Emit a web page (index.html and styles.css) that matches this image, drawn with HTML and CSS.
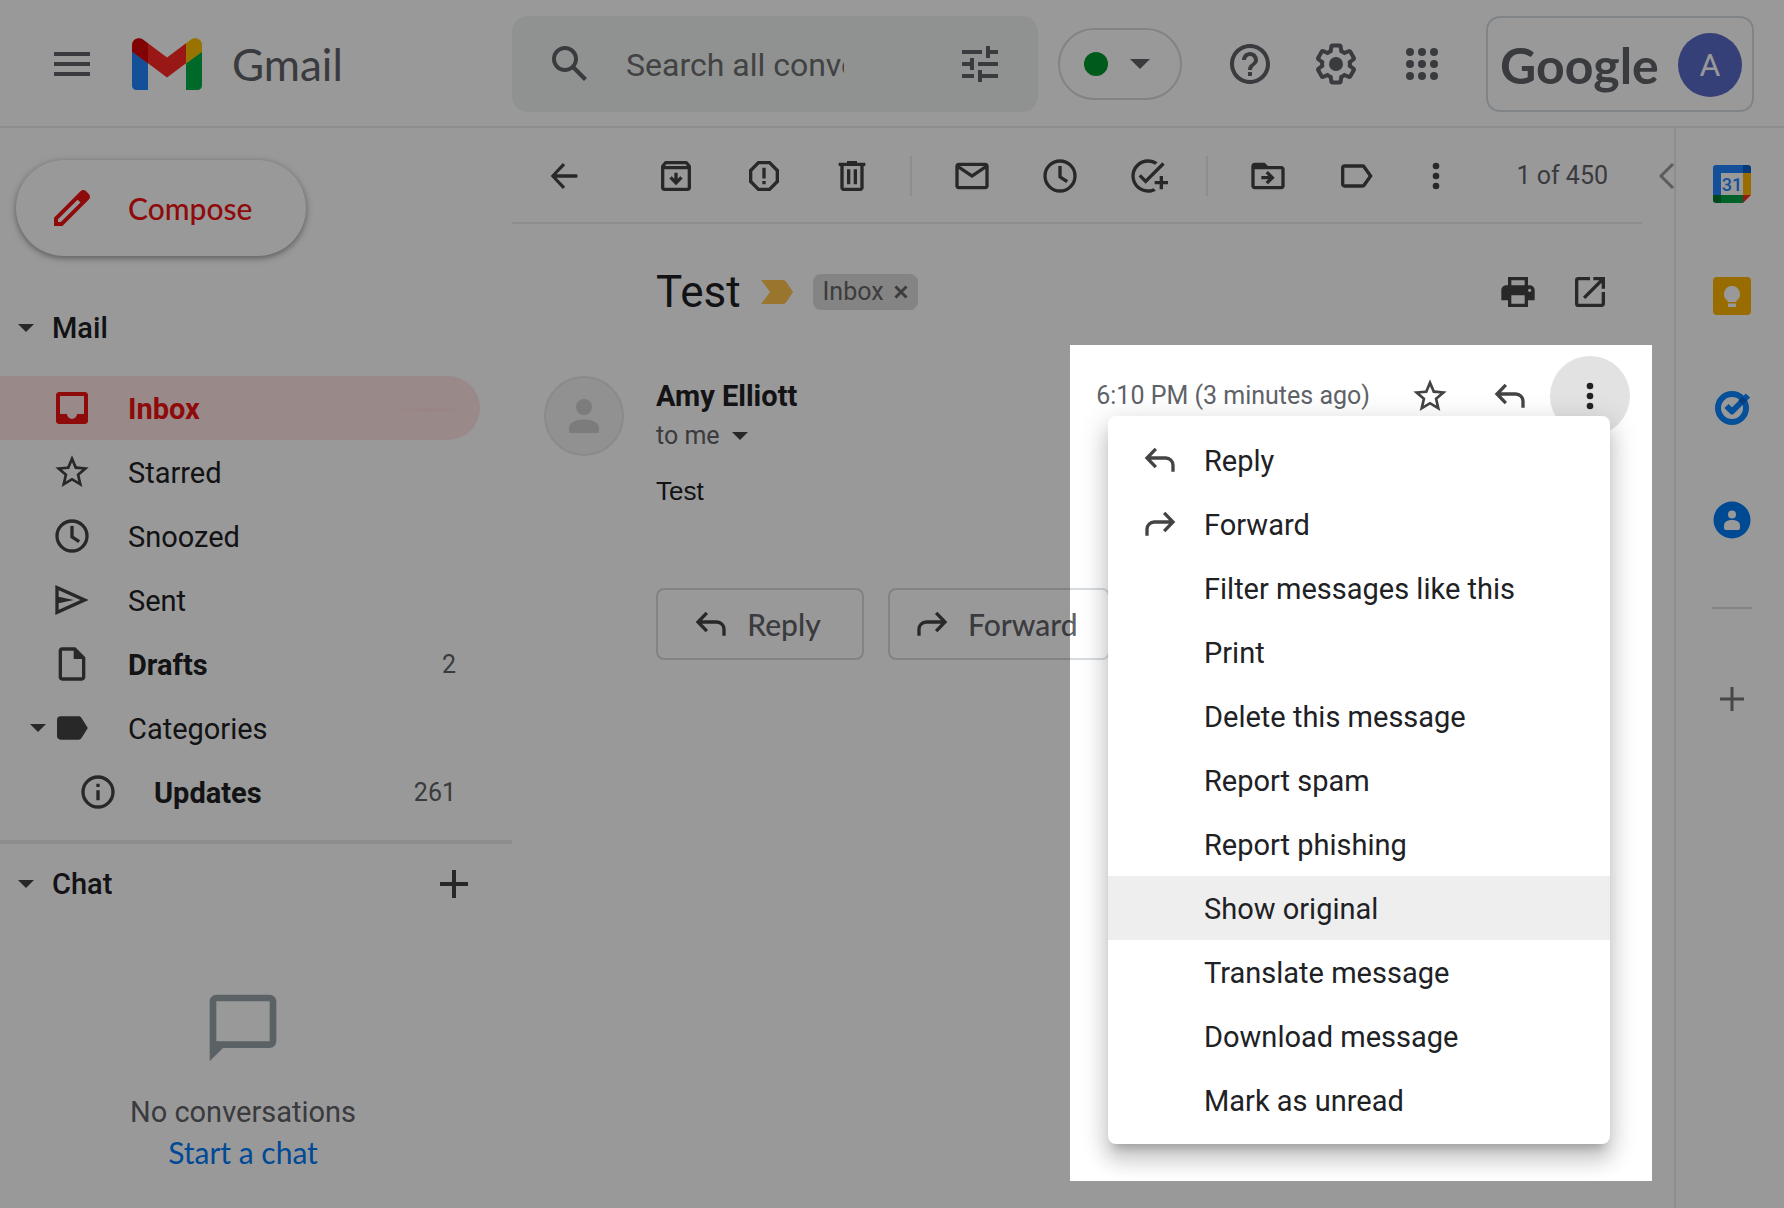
FILE: index.html
```html
<!DOCTYPE html>
<html lang="en">
<head>
<meta charset="utf-8">
<meta name="viewport" content="width=device-width, initial-scale=1">
<title>Gmail</title>
<link rel="stylesheet" href="styles.css">
</head>
<body>
<svg class="sprite" aria-hidden="true">
  <symbol id="i-menu" viewBox="0 0 24 24"><path d="M3 18h18v-2H3v2zm0-5h18v-2H3v2zm0-7v2h18V6H3z"/></symbol>
  <symbol id="i-search" viewBox="0 0 24 24"><path d="M20.49 19l-5.73-5.73C15.53 12.2 16 10.91 16 9.5A6.5 6.5 0 1 0 9.5 16c1.41 0 2.7-.47 3.77-1.24L19 20.49 20.49 19zM5 9.5C5 7.01 7.01 5 9.5 5S14 7.01 14 9.5 11.99 14 9.5 14 5 11.99 5 9.5z"/></symbol>
  <symbol id="i-tune" viewBox="0 0 24 24"><path d="M3 17v2h6v-2H3zM3 5v2h10V5H3zm10 16v-2h8v-2h-8v-2h-2v6h2zM7 9v2H3v2h4v2h2V9H7zm14 4v-2H11v2h10zm-6-4h2V7h4V5h-4V3h-2v6z"/></symbol>
  <symbol id="i-help" viewBox="0 0 24 24"><path d="M11 18h2v-2h-2v2zm1-16C6.48 2 2 6.48 2 12s4.48 10 10 10 10-4.48 10-10S17.52 2 12 2zm0 18c-4.41 0-8-3.59-8-8s3.59-8 8-8 8 3.59 8 8-3.59 8-8 8zm0-14c-2.21 0-4 1.79-4 4h2c0-1.1.9-2 2-2s2 .9 2 2c0 2-3 1.75-3 5h2c0-2.25 3-2.5 3-5 0-2.21-1.79-4-4-4z"/></symbol>
  <symbol id="i-gear" viewBox="0 0 24 24"><path d="M13.85 22.25h-3.7c-.74 0-1.36-.54-1.45-1.27l-.27-1.89c-.27-.14-.53-.29-.79-.46l-1.8.72c-.7.26-1.47-.03-1.81-.65L2.2 15.53c-.35-.66-.2-1.44.36-1.88l1.53-1.19c-.01-.15-.02-.3-.02-.46 0-.15.01-.31.02-.46l-1.52-1.19c-.59-.45-.74-1.26-.37-1.88l1.85-3.19c.34-.62 1.11-.9 1.79-.63l1.81.73c.26-.17.52-.32.78-.46l.27-1.91c.09-.7.71-1.25 1.44-1.25h3.7c.74 0 1.36.54 1.45 1.27l.27 1.89c.27.14.53.29.79.46l1.8-.72c.71-.26 1.48.03 1.82.65l1.84 3.18c.36.66.2 1.44-.36 1.88l-1.52 1.19c.01.15.02.3.02.46s-.01.31-.02.46l1.52 1.19c.56.45.72 1.23.37 1.86l-1.86 3.22c-.34.62-1.11.9-1.8.63l-1.8-.72c-.26.17-.52.32-.78.46l-.27 1.91c-.1.68-.72 1.22-1.46 1.22zm-3.23-2h2.76l.37-2.55.53-.22c.44-.18.88-.44 1.34-.78l.45-.34 2.38.96 1.38-2.4-2.03-1.58.07-.56c.03-.26.06-.51.06-.78s-.03-.53-.06-.78l-.07-.56 2.03-1.58-1.39-2.4-2.39.96-.45-.35c-.42-.32-.87-.58-1.33-.77l-.52-.22-.37-2.55h-2.76l-.37 2.55-.53.21c-.44.19-.88.44-1.34.79l-.45.33-2.38-.95-1.39 2.39 2.03 1.58-.07.56a7 7 0 0 0-.06.79c0 .26.02.53.06.78l.07.56-2.03 1.58 1.38 2.4 2.39-.96.45.35c.43.33.86.58 1.33.77l.53.22.38 2.55z"/><circle cx="12" cy="12" r="3.5"/></symbol>
  <symbol id="i-apps" viewBox="0 0 24 24"><circle cx="6" cy="6" r="2"/><circle cx="12" cy="6" r="2"/><circle cx="18" cy="6" r="2"/><circle cx="6" cy="12" r="2"/><circle cx="12" cy="12" r="2"/><circle cx="18" cy="12" r="2"/><circle cx="6" cy="18" r="2"/><circle cx="12" cy="18" r="2"/><circle cx="18" cy="18" r="2"/></symbol>
  <symbol id="i-pencil" viewBox="0 0 24 24"><path d="M20.41 4.94l-1.35-1.35c-.78-.78-2.05-.78-2.83 0L3 16.82V21h4.18L20.41 7.77c.79-.78.79-2.05 0-2.83zm-14 14.12L5 19v-1.36l9.82-9.82 1.41 1.41-9.82 9.83z"/></symbol>
  <symbol id="i-caret" viewBox="0 0 16 8"><path d="M0 0h16L8 8z"/></symbol>
  <symbol id="i-inbox" viewBox="0 0 20 20"><path d="M16.5 2h-13C2.7 2 2 2.700 2 3.500v13c0 .8.7 1.500 1.500 1.500h13c.8 0 1.500-.7 1.500-1.500v-13c0-.8-.7-1.500-1.500-1.500zM16 13h-3.400c-.3 1.400-1.300 2.500-2.600 2.500S7.700 14.400 7.400 13H4V4h12v9z"/></symbol>
  <symbol id="i-star" viewBox="0 0 24 24"><path d="M22 9.240l-7.190-.620L12 2 9.190 8.630 2 9.240l5.460 4.730L5.820 21 12 17.270 18.180 21l-1.630-7.030L22 9.240zM12 15.400l-3.760 2.270 1-4.280-3.320-2.880 4.380-.380L12 6.100l1.710 4.040 4.380.380-3.320 2.880 1 4.280L12 15.400z"/></symbol>
  <symbol id="i-clock" viewBox="0 0 24 24"><path d="M12 2a10 10 0 1 0 0 20 10 10 0 0 0 0-20zm0 18a8 8 0 1 1 0-16 8 8 0 0 1 0 16z"/><path d="M13 6h-2v7l4.700 3.200 1.200-1.600L13 12z"/></symbol>
  <symbol id="i-sent" viewBox="0 0 24 24"><path d="M2 3v18l20-9L2 3zm2 3.100L17.100 12 4 17.900V14l9-2-9-2V6.100z"/></symbol>
  <symbol id="i-draft" viewBox="0 0 24 24"><path d="M14 2H6c-1.100 0-2 .9-2 2v16c0 1.100.9 2 2 2h12c1.100 0 2-.9 2-2V8l-6-6zM6 20V4h7v5h5v11H6z"/></symbol>
  <symbol id="i-label-fill" viewBox="0 0 24 24"><path d="M17.630 5.840C17.270 5.330 16.670 5 16 5H5c-1.100 0-2 .9-2 2v10c0 1.100.9 2 2 2h11c.670 0 1.270-.330 1.630-.840L21.500 12l-3.870-6.160z"/></symbol>
  <symbol id="i-info" viewBox="0 0 24 24"><path d="M11 7h2v2h-2zm0 4h2v6h-2zm1-9a10 10 0 1 0 0 20 10 10 0 0 0 0-20zm0 18a8 8 0 1 1 0-16 8 8 0 0 1 0 16z"/></symbol>
  <symbol id="i-plus" viewBox="0 0 28 28"><path d="M12 0h4v12h12v4H16v12h-4V16H0v-4h12z"/></symbol>
  <symbol id="i-bubble" viewBox="0 0 24 24"><path d="M20 2H4c-1.100 0-2 .9-2 2v18l4-4h14c1.100 0 2-.9 2-2V4c0-1.100-.9-2-2-2zm0 14H4V4h16v12z"/></symbol>
  <symbol id="i-back" viewBox="0 0 24 24"><path d="M20 11H7.500l5.200-5.500L11.300 4.200 4 12l7.300 7.800 1.400-1.300L7.500 13H20z"/></symbol>
  <symbol id="i-archive" viewBox="0 0 24 24"><path d="M20.540 5.230l-1.390-1.680C18.880 3.210 18.470 3 18 3H6c-.470 0-.880.210-1.160.550L3.460 5.230C3.170 5.570 3 6.020 3 6.500V19c0 1.100.9 2 2 2h14c1.100 0 2-.9 2-2V6.500c0-.480-.170-.930-.460-1.270zM6.240 5h11.520l.830 1H5.420l.820-1zM5 19V8h14v11H5z"/><path d="M16 13.500l-1.400-1.400-1.600 1.570V10h-2v3.670L9.400 12.100 8 13.500l4 4z"/></symbol>
  <symbol id="i-spam" viewBox="0 0 24 24"><path d="M15.730 3H8.270L3 8.270v7.460L8.270 21h7.460L21 15.730V8.270L15.730 3zM19 14.900L14.900 19H9.100L5 14.900V9.100L9.100 5h5.800L19 9.100v5.800zM11 7h2v6.500h-2zm0 8h2v2h-2z"/></symbol>
  <symbol id="i-trash" viewBox="0 0 24 24"><path d="M15 4V3H9v1H4v2h1v13c0 1.100.9 2 2 2h10c1.100 0 2-.9 2-2V6h1V4h-5zm2 15H7V6h10v13zM9 8h2v9H9zm4 0h2v9h-2z"/></symbol>
  <symbol id="i-mail" viewBox="0 0 24 24"><path d="M20 4H4c-1.100 0-2 .9-2 2v12c0 1.100.9 2 2 2h16c1.100 0 2-.9 2-2V6c0-1.100-.9-2-2-2zm-.8 2L12 10.800 4.800 6h14.400zM4 18V7.870l8 5.330 8-5.330V18H4z"/></symbol>
  <symbol id="i-task" viewBox="0 0 24 24"><path d="M22 5.180L10.590 16.600l-4.240-4.240 1.410-1.410 2.830 2.830 10-10L22 5.180zM12 20c-4.410 0-8-3.590-8-8s3.590-8 8-8c1.570 0 3.040.460 4.280 1.250l1.450-1.450C16.100 2.670 14.130 2 12 2 6.480 2 2 6.480 2 12s4.480 10 10 10c1.730 0 3.360-.440 4.780-1.220l-1.500-1.500c-1 .460-2.110.720-3.280.720zm7-5h-3v2h3v3h2v-3h3v-2h-3v-3h-2v3z"/></symbol>
  <symbol id="i-folder" viewBox="0 0 24 24"><path d="M20 6h-8l-2-2H4c-1.100 0-2 .9-2 2v12c0 1.100.9 2 2 2h16c1.100 0 2-.9 2-2V8c0-1.100-.9-2-2-2zm0 12H4V8h16v10z"/><path d="M12.160 12H8v2h4.160l-1.590 1.590L11.990 17 16 13.010 11.990 9l-1.410 1.410z"/></symbol>
  <symbol id="i-label" viewBox="0 0 24 24"><path d="M17.630 5.840C17.270 5.330 16.670 5 16 5H5c-1.100 0-2 .9-2 2v10c0 1.100.9 2 2 2h11c.670 0 1.270-.330 1.630-.840L22 12l-4.370-6.160zM16 17H5V7h11l3.550 5L16 17z"/></symbol>
  <symbol id="i-more" viewBox="0 0 24 24"><circle cx="12" cy="6" r="2"/><circle cx="12" cy="12" r="2"/><circle cx="12" cy="18" r="2"/></symbol>
  <symbol id="i-chevron" viewBox="0 0 16 26"><path d="M15 1L3 13l12 12" fill="none" stroke="currentColor" stroke-width="3"/></symbol>
  <symbol id="i-print" viewBox="0 0 24 24"><path fill-rule="evenodd" d="M19 8h-1V3H6v5H5c-1.660 0-3 1.340-3 3v6h4v4h12v-4h4v-6c0-1.660-1.340-3-3-3zM8 5h8v3H8V5zm8 14H8v-5h8v5zm3-7a1 1 0 1 1 0-2 1 1 0 0 1 0 2z"/></symbol>
  <symbol id="i-open" viewBox="0 0 24 24"><path d="M19 19H5V5h7V3H5a2 2 0 0 0-2 2v14a2 2 0 0 0 2 2h14c1.100 0 2-.9 2-2v-7h-2v7zM14 3v2h3.590l-9.830 9.830 1.410 1.410L19 6.410V10h2V3h-7z"/></symbol>
  <symbol id="i-reply" viewBox="0 0 24 24"><path d="M9.500 5.300L4.200 10.800l5.300 5.500M4.400 10.800H15.500a4.300 4.300 0 0 1 4.300 4.300v3.900" fill="none" stroke="currentColor" stroke-width="2"/></symbol>
  <symbol id="i-forward" viewBox="0 0 24 24"><path d="M14.500 5.300l5.300 5.500-5.300 5.500M19.600 10.800H8.500a4.300 4.300 0 0 0-4.300 4.300v3.900" fill="none" stroke="currentColor" stroke-width="2"/></symbol>
</svg>

<header class="topbar">
  <div class="brand">
    <button class="icon-btn" type="button" aria-label="Main menu"><svg class="ic-48"><use href="#i-menu"/></svg></button>
    <a class="brand-link" href="#inbox">
      <svg class="logo" viewBox="0 0 70 52" aria-hidden="true">
        <path fill="#2185ff" d="M0 13.500l16 11.800V52H4.500A4.500 4.500 0 0 1 0 47.500z"/>
        <path fill="#00b045" d="M70 13.500L54 25.300V52h11.500a4.500 4.500 0 0 0 4.500-4.500z"/>
        <path fill="#ffc000" d="M54 5.200l4.300-3.300C63-1.600 70 .9 70 7.200v6.500L54 25.400z"/>
        <path fill="#ff2824" d="M16 25.300V5.200L35 19.400 54 5.200v20.100L35 39.500z"/>
        <path fill="#d80606" d="M0 7.200v6.500l16 11.700V5.200l-4.300-3.300C7-1.600 0 .9 0 7.200z"/>
      </svg>
      <span class="brand-name">Gmail</span>
    </a>
  </div>
  <form class="search" role="search">
    <button class="icon-btn" type="button" aria-label="Search"><svg class="ic-48"><use href="#i-search"/></svg></button>
    <input class="search-input" type="text" aria-label="Search" placeholder="Search all conversations">
    <button class="icon-btn" type="button" aria-label="Search options"><svg class="ic-48"><use href="#i-tune"/></svg></button>
  </form>
  <button class="status" type="button" aria-label="Status: active"><span class="status-dot"></span><svg class="caret-lg"><use href="#i-caret"/></svg></button>
  <div class="top-icons">
    <button class="icon-btn" type="button" aria-label="Support"><svg class="ic-48"><use href="#i-help"/></svg></button>
    <button class="icon-btn" type="button" aria-label="Settings"><svg class="ic-48"><use href="#i-gear"/></svg></button>
    <button class="icon-btn" type="button" aria-label="Google apps"><svg class="ic-48"><use href="#i-apps"/></svg></button>
  </div>
  <a class="account" href="#account"><span class="account-brand">Google</span><span class="account-avatar">A</span></a>
</header>

<div class="layout">
  <aside class="sidebar">
    <button class="compose" type="button"><svg class="ic-48"><use href="#i-pencil"/></svg><span>Compose</span></button>
    <h2 class="side-head"><svg class="caret"><use href="#i-caret"/></svg><span>Mail</span></h2>
    <nav class="folders">
      <a class="folder folder-active" href="#inbox"><svg class="ic-40"><use href="#i-inbox"/></svg><span>Inbox</span></a>
      <a class="folder" href="#starred"><svg class="ic-40"><use href="#i-star"/></svg><span>Starred</span></a>
      <a class="folder" href="#snoozed"><svg class="ic-40"><use href="#i-clock"/></svg><span>Snoozed</span></a>
      <a class="folder" href="#sent"><svg class="ic-40"><use href="#i-sent"/></svg><span>Sent</span></a>
      <a class="folder folder-unread" href="#drafts"><svg class="ic-40"><use href="#i-draft"/></svg><span>Drafts</span><span class="count">2</span></a>
      <a class="folder folder-tree" href="#categories"><svg class="caret"><use href="#i-caret"/></svg><svg class="ic-40"><use href="#i-label-fill"/></svg><span>Categories</span></a>
      <a class="folder folder-unread folder-child" href="#updates"><svg class="ic-40"><use href="#i-info"/></svg><span>Updates</span><span class="count">261</span></a>
    </nav>
    <section class="chat">
      <div class="chat-head">
        <h2 class="side-head"><svg class="caret"><use href="#i-caret"/></svg><span>Chat</span></h2>
        <button class="icon-btn" type="button" aria-label="Start a chat"><svg class="ic-28"><use href="#i-plus"/></svg></button>
      </div>
      <div class="chat-empty">
        <svg class="ic-80"><use href="#i-bubble"/></svg>
        <p>No conversations</p>
        <a href="#chat">Start a chat</a>
      </div>
    </section>
  </aside>

  <main class="mail">
    <div class="toolbar">
      <button class="tool tool-back" type="button" aria-label="Back to Inbox"><svg class="ic-40"><use href="#i-back"/></svg></button>
      <button class="tool" type="button" aria-label="Archive"><svg class="ic-40"><use href="#i-archive"/></svg></button>
      <button class="tool" type="button" aria-label="Report spam"><svg class="ic-40"><use href="#i-spam"/></svg></button>
      <button class="tool" type="button" aria-label="Delete"><svg class="ic-40"><use href="#i-trash"/></svg></button>
      <span class="tool-sep"></span>
      <button class="tool" type="button" aria-label="Mark as unread"><svg class="ic-40"><use href="#i-mail"/></svg></button>
      <button class="tool" type="button" aria-label="Snooze"><svg class="ic-40"><use href="#i-clock"/></svg></button>
      <button class="tool" type="button" aria-label="Add to Tasks"><svg class="ic-40"><use href="#i-task"/></svg></button>
      <span class="tool-sep"></span>
      <button class="tool" type="button" aria-label="Move to"><svg class="ic-40"><use href="#i-folder"/></svg></button>
      <button class="tool" type="button" aria-label="Labels"><svg class="ic-40"><use href="#i-label"/></svg></button>
      <button class="tool tool-more" type="button" aria-label="More"><svg class="ic-40"><use href="#i-more"/></svg></button>
      <span class="pager">1 of 450</span>
      <button class="newer" type="button" aria-label="Newer"><svg class="chevron"><use href="#i-chevron"/></svg></button>
    </div>

    <div class="subject">
      <h1 class="subject-title">Test</h1>
      <svg class="marker" viewBox="0 0 32 24" aria-hidden="true"><path fill="#ffc34c" d="M0 0h21c2 0 3.500.8 4.500 2.300L32 12l-6.500 9.700C24.500 23.200 23 24 21 24H0l9-12z"/></svg>
      <span class="chip">Inbox<button class="chip-x" type="button" aria-label="Remove label Inbox"><svg class="x-ic" viewBox="0 0 14 14"><path d="M1.500 1.500l11 11m0-11l-11 11" stroke="currentColor" stroke-width="3"/></svg></button></span>
      <div class="subject-tools">
        <button class="icon-btn" type="button" aria-label="Print all"><svg class="ic-40"><use href="#i-print"/></svg></button>
        <button class="icon-btn" type="button" aria-label="In new window"><svg class="ic-40"><use href="#i-open"/></svg></button>
      </div>
    </div>

    <article class="message">
      <div class="sender-pic"><svg viewBox="0 0 30 34" class="person"><circle cx="15" cy="8" r="8"/><path d="M0 34v-5c0-6 8-8.500 15-8.500S30 23 30 29v5z"/></svg></div>
      <div class="message-main">
        <div class="message-head">
          <div class="sender">
            <h3 class="sender-name">Amy Elliott</h3>
            <button class="to-me" type="button">to me<svg class="caret"><use href="#i-caret"/></svg></button>
          </div>
          <time class="when">6:10 PM (3 minutes ago)</time>
          <div class="actions">
            <button class="round" type="button" aria-label="Star"><svg class="ic-40"><use href="#i-star"/></svg></button>
            <button class="round" type="button" aria-label="Reply"><svg class="ic-40"><use href="#i-reply"/></svg></button>
            <button class="round round-open" type="button" aria-label="More" aria-expanded="true"><svg class="ic-40"><use href="#i-more"/></svg></button>
            <div class="popup">
              <div class="menu" role="menu">
                <button class="item" type="button" role="menuitem"><svg class="ic-40"><use href="#i-reply"/></svg><span>Reply</span></button>
                <button class="item" type="button" role="menuitem"><svg class="ic-40"><use href="#i-forward"/></svg><span>Forward</span></button>
                <button class="item" type="button" role="menuitem"><span>Filter messages like this</span></button>
                <button class="item" type="button" role="menuitem"><span>Print</span></button>
                <button class="item" type="button" role="menuitem"><span>Delete this message</span></button>
                <button class="item" type="button" role="menuitem"><span>Report spam</span></button>
                <button class="item" type="button" role="menuitem"><span>Report phishing</span></button>
                <button class="item item-hover" type="button" role="menuitem"><span>Show original</span></button>
                <button class="item" type="button" role="menuitem"><span>Translate message</span></button>
                <button class="item" type="button" role="menuitem"><span>Download message</span></button>
                <button class="item" type="button" role="menuitem"><span>Mark as unread</span></button>
              </div>
              <div class="spotlight"></div>
            </div>
          </div>
        </div>
        <p class="body-text">Test</p>
        <div class="respond">
          <button class="respond-btn" type="button"><svg class="ic-40"><use href="#i-reply"/></svg><span>Reply</span></button>
          <button class="respond-btn" type="button"><svg class="ic-40"><use href="#i-forward"/></svg><span>Forward</span></button>
        </div>
      </div>
    </article>
  </main>

  <aside class="rail">
    <a href="#calendar" aria-label="Calendar"><svg class="ic-38" viewBox="0 0 38 38">
      <path fill="#fff" d="M8 8h22v22H8z"/>
      <path fill="#2185ff" d="M3 0h27v8H8v22H0V3a3 3 0 0 1 3-3z"/>
      <path fill="#0a5fc8" d="M30 0h5a3 3 0 0 1 3 3v5h-8z"/>
      <path fill="#ffb800" d="M30 8h8v22h-8z"/>
      <path fill="#00a443" d="M8 30h22v8H8z"/>
      <path fill="#007a2e" d="M0 30h8v8H3a3 3 0 0 1-3-3z"/>
      <path fill="#f52c22" d="M30 30h8l-8 8z"/>
      <text class="cal-day" x="19" y="26" text-anchor="middle">31</text>
    </svg></a>
    <a href="#keep" aria-label="Keep"><svg class="ic-38" viewBox="0 0 38 38"><rect width="38" height="38" rx="4" fill="#ffb400"/><path fill="#fff" d="M19 9a8 8 0 0 0-4.500 14.600V25h9v-1.400A8 8 0 0 0 19 9zM15 26.500h8V30h-8z"/></svg></a>
    <a href="#tasks" aria-label="Tasks"><svg class="ic-38" viewBox="0 0 38 38"><circle cx="19" cy="19" r="14" fill="none" stroke="#0a86ff" stroke-width="6"/><path d="M13.500 17l5.500 5.500L35 6.500" fill="none" stroke="#0a86ff" stroke-width="6" stroke-linejoin="round"/><path d="M25.500 11.500l4-4 4.500 4-4.500 4.500z" fill="#0868d8"/></svg></a>
    <a href="#contacts" aria-label="Contacts"><svg class="ic-38" viewBox="0 0 38 38"><circle cx="19" cy="19" r="18.500" fill="#007af5"/><circle cx="19" cy="13.500" r="4" fill="#fff"/><path fill="#fff" d="M11 27v-2.500c0-4 4-5.500 8-5.500s8 1.500 8 5.500V27a2 2 0 0 1-2 2H13a2 2 0 0 1-2-2z"/></svg></a>
    <hr class="rail-sep">
    <button class="icon-btn" type="button" aria-label="Get add-ons"><svg class="ic-24" viewBox="0 0 24 24"><path d="M10.500 0h3v10.500H24v3H13.500V24h-3V13.500H0v-3h10.500z"/></svg></button>
  </aside>
</div>
</body>
</html>
```
FILE: styles.css
```css
:root {
  --ui: Roboto, "Liberation Sans", sans-serif;
  --brand: "Google Sans", "Product Sans", Lato, sans-serif;
  --line: #ececec;
  --outline: #d6dce0;
  --ink: #202124;
  --muted: #5f6368;
  --icon: #444;
}

* { box-sizing: border-box; }

body {
  margin: 0;
  min-height: 100vh;
  display: flex;
  flex-direction: column;
  background: #fff;
  color: var(--ink);
  font-family: var(--ui);
  font-size: 29px;
  line-height: 40px;
  overflow-x: hidden;
}

h1, h2, h3, p { margin: 0; font-weight: 400; }
a { color: inherit; text-decoration: none; }
svg { display: block; flex: none; fill: currentColor; }
button {
  margin: 0;
  padding: 0;
  border: 0;
  background: none;
  color: inherit;
  font: inherit;
  cursor: pointer;
}

.sprite { position: absolute; width: 0; height: 0; }
.ic-24 { width: 24px; height: 24px; }
.ic-28 { width: 28px; height: 28px; }
.ic-38 { width: 38px; height: 38px; }
.ic-40 { width: 40px; height: 40px; }
.ic-48 { width: 48px; height: 48px; }
.ic-80 { width: 80px; height: 80px; }
.caret { width: 16px; height: 8px; }
.caret-lg { width: 20px; height: 10px; }
.icon-btn { flex: none; }

/* Top bar */
.topbar {
  display: flex;
  align-items: center;
  height: 128px;
  padding: 2px 30px 0 0;
  border-bottom: 2px solid var(--line);
  color: var(--muted);
}
.brand {
  flex: none;
  width: 512px;
  padding-left: 48px;
  display: flex;
  align-items: center;
  gap: 36px;
}
.brand-link { display: flex; align-items: center; gap: 30px; }
.logo { width: 70px; height: 52px; }
.brand-name { font-family: var(--brand); font-size: 44px; line-height: 52px; }

.search {
  flex: 1;
  min-width: 0;
  height: 96px;
  padding: 0 34px;
  display: flex;
  align-items: center;
  gap: 32px;
  background: #f1f3f4;
  border-radius: 16px;
}
.search-input {
  flex: 1;
  min-width: 0;
  margin-right: 80px;
  padding: 2px 0 0;
  border: 0;
  outline: 0;
  background: none;
  color: var(--ink);
  font-family: var(--ui);
  font-size: 32px;
  line-height: 40px;
}
.search-input::placeholder { color: #6e6e6e; opacity: 1; }

.status {
  flex: none;
  width: 124px;
  height: 72px;
  margin-left: 20px;
  padding-right: 6px;
  display: flex;
  align-items: center;
  justify-content: center;
  gap: 22px;
  border: 2px solid var(--outline);
  border-radius: 36px;
}
.status-dot { width: 24px; height: 24px; border-radius: 50%; background: #00962d; }
.top-icons { display: flex; gap: 38px; margin: 0 40px 0 44px; }

.account {
  flex: none;
  width: 268px;
  height: 96px;
  padding: 2px 10px 0 12px;
  display: flex;
  align-items: center;
  justify-content: space-between;
  border: 2px solid var(--outline);
  border-radius: 14px;
}
.account-brand { font-family: var(--brand); font-size: 50px; font-weight: 700; line-height: 60px; }
.account-avatar {
  width: 64px;
  height: 64px;
  border-radius: 50%;
  background: #5a6bc8;
  color: #fff;
  font-size: 32px;
  line-height: 64px;
  text-align: center;
}

.layout { flex: 1; display: flex; }

/* Sidebar */
.sidebar { flex: none; width: 512px; padding-top: 32px; }
.compose {
  min-width: 290px;
  height: 96px;
  margin-left: 16px;
  padding: 0 48px 0 32px;
  display: flex;
  align-items: center;
  gap: 32px;
  border-radius: 48px;
  background: #fff;
  box-shadow: 0 2px 4px rgba(60, 64, 67, .3), 0 2px 6px 2px rgba(60, 64, 67, .2);
  color: #ee1111;
  font-family: var(--brand);
  font-size: 30px;
  font-weight: 500;
}
.side-head {
  display: flex;
  align-items: center;
  gap: 18px;
  padding-left: 18px;
  font-family: var(--ui);
  font-size: 29px;
  font-weight: 500;
  line-height: 40px;
}
.side-head .caret, .folder-tree .caret { color: var(--icon); }
.compose + .side-head { margin-top: 52px; }

.folders { margin-top: 28px; }
.folder {
  width: 480px;
  height: 64px;
  padding: 0 24px 0 52px;
  display: flex;
  align-items: center;
  gap: 36px;
  border-radius: 0 32px 32px 0;
}
.folder .ic-40 { color: var(--icon); }
.folder span, .item span { padding-top: 2px; }
.folder-active {
  background: radial-gradient(ellipse at 430px 34px, #ffdcd8 0, #ffe6e5 44px) #ffe6e5;
  color: #ee1111;
  font-weight: 700;
}
.folder-active .ic-40 { color: #ee1111; }
.folder-unread { font-weight: 700; }
.folder-tree { padding-left: 30px; }
.folder-tree .caret { margin-right: -30px; }
.folder-child { padding-left: 78px; }
.count { margin-left: auto; color: var(--muted); font-size: 25px; font-weight: 400; }

.chat { margin-top: 16px; border-top: 4px solid var(--line); padding-top: 20px; }
.chat-head { display: flex; align-items: center; justify-content: space-between; padding-right: 44px; color: var(--ink); }
.chat-head .icon-btn { color: var(--icon); }
.chat-empty {
  width: 486px;
  margin-top: 84px;
  display: flex;
  flex-direction: column;
  align-items: center;
  color: var(--muted);
}
.chat-empty .ic-80 { margin-bottom: 24px; color: #97a3a8; }
.chat-empty a { color: #007bfa; font-family: var(--brand); font-size: 30px; }

/* Conversation */
.mail { flex: 1; min-width: 0; }
.toolbar {
  display: flex;
  align-items: center;
  height: 96px;
  padding-left: 8px;
  color: var(--icon);
  background: linear-gradient(var(--line), var(--line)) left bottom / calc(100% - 32px) 2px no-repeat;
}
.tool { flex: none; width: 88px; height: 88px; display: grid; place-items: center; }
.tool-back { margin-right: 24px; }
.tool-more { width: 72px; }
.tool-sep { flex: none; width: 2px; height: 40px; margin: 0 16px 0 14px; background: var(--line); }
.pager { margin-left: auto; margin-right: 50px; color: var(--muted); font-size: 25px; white-space: nowrap; }
.newer { flex: none; width: 16px; overflow: hidden; color: #999; }
.chevron { width: 16px; height: 26px; }

.subject {
  display: flex;
  align-items: center;
  height: 72px;
  margin-top: 32px;
  padding: 0 64px 0 144px;
}
.subject-title { font-size: 44px; line-height: 52px; }
.marker { width: 32px; height: 24px; margin: 0 20px; }
.chip {
  height: 36px;
  padding: 0 10px;
  display: flex;
  align-items: center;
  gap: 10px;
  border-radius: 8px;
  background: #ddd;
  color: #666;
  font-size: 25px;
}
.x-ic { width: 14px; height: 14px; }
.subject-tools { margin-left: auto; display: flex; gap: 32px; color: var(--icon); }

.message { display: flex; gap: 32px; padding: 28px 44px 0 32px; }
.sender-pic {
  flex: none;
  width: 80px;
  height: 80px;
  margin-top: 20px;
  display: grid;
  place-items: center;
  border: 2px solid #e6e6e6;
  border-radius: 50%;
  background: #f2f2f2;
  color: #cfcfcf;
}
.person { width: 30px; height: 34px; }
.message-main { flex: 1; min-width: 0; }
.message-head { display: flex; align-items: flex-start; height: 100px; }
.sender { flex: 1; padding-top: 20px; }
.sender-name { font-size: 29px; font-weight: 700; line-height: 40px; }
.to-me { display: flex; align-items: center; gap: 12px; color: var(--muted); font-size: 25px; line-height: 40px; }
.to-me .caret { color: var(--icon); }
.when { margin-right: 20px; color: var(--muted); font-size: 25px; line-height: 80px; white-space: nowrap; }
.actions { position: relative; display: flex; color: var(--icon); }
.round { width: 80px; height: 80px; display: grid; place-items: center; border-radius: 50%; }
.round-open { background: #e2e2e2; color: #222; }

/* Message menu and the highlight that dims everything around it */
.popup { position: absolute; top: 60px; right: 20px; z-index: 5; width: 502px; }
.menu {
  padding: 12px 0;
  border-radius: 8px;
  background: #fff;
  box-shadow: 0 16px 20px 2px rgba(0, 0, 0, .14), 0 6px 28px 4px rgba(0, 0, 0, .12), 0 10px 10px -6px rgba(0, 0, 0, .2);
}
.item {
  width: 100%;
  height: 64px;
  padding-left: 32px;
  display: grid;
  grid-template-columns: 64px 1fr;
  align-items: center;
  color: var(--ink);
  text-align: left;
}
.item .ic-40 { color: var(--icon); }
.item span { grid-column: 2; }
.item-hover { background: #eee; }
.spotlight {
  position: absolute;
  inset: -71px -42px -37px -38px;
  box-shadow: 0 0 0 3000px rgba(0, 0, 0, .4);
  pointer-events: none;
}

.body-text { margin-top: 20px; font-family: "Liberation Sans", Arial, sans-serif; font-size: 26px; line-height: 30px; }
.respond { display: flex; gap: 24px; margin-top: 82px; }
.respond-btn {
  min-width: 208px;
  height: 72px;
  padding: 0 30px 0 22px;
  display: flex;
  align-items: center;
  justify-content: center;
  gap: 16px;
  border: 2px solid var(--outline);
  border-radius: 8px;
  color: var(--muted);
  font-family: var(--brand);
  font-size: 30px;
  font-weight: 500;
}
.respond-btn .ic-40 { color: var(--icon); }

/* App rail */
.rail {
  flex: none;
  width: 110px;
  padding: 37px 0 0 4px;
  display: flex;
  flex-direction: column;
  align-items: center;
  gap: 74px;
  border-left: 2px solid var(--line);
  color: #777;
}
.cal-day { fill: #2185ff; font-family: var(--ui); font-size: 18px; font-weight: 500; }
.rail-sep { width: 40px; height: 2px; margin: -6px 0 4px; border: 0; background: var(--outline); }
```
